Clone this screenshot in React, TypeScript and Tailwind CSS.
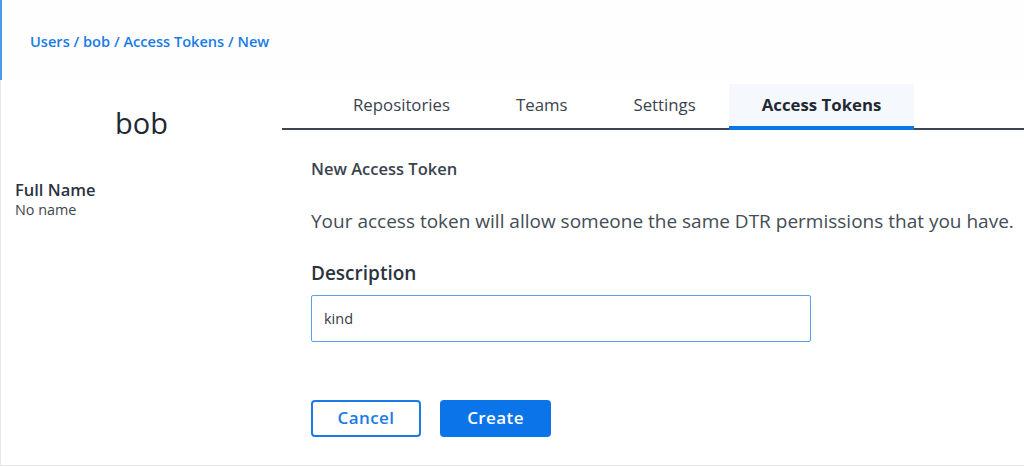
import React from 'react';

const tabs = ['Repositories', 'Teams', 'Settings', 'Access Tokens'];

export default function App() {
  const active = 'Access Tokens';

  return (
    <div className="w-[1024px] h-[467px] bg-white overflow-hidden text-[#2b3440]" style={{ fontFamily: '"Open Sans", "Noto Sans", sans-serif' }}>
      {/* Breadcrumb header */}
      <div className="h-[80px] border-l-2 border-[#4a9be8] bg-[#fefefe] flex items-center pl-[28px] pt-[4px]">
        <nav className="text-[14.6px] font-semibold text-[#1a7be6]">
          Users / bob / Access Tokens / New
        </nav>
      </div>

      <div className="h-[386px] flex border-l border-b border-[#e8e8ea]">
        {/* Profile sidebar */}
        <aside className="w-[281px] shrink-0 pt-[24px]">
          <h1 className="text-center text-[29px] leading-[38px] font-medium text-[#1f2933]">bob</h1>
          <div className="mt-[37px] pl-[14px]">
            <div className="text-[16.5px] leading-[21px] font-semibold text-[#2b3440]">Full Name</div>
            <div className="text-[14.4px] leading-[19px] text-[#3d4650]">No name</div>
          </div>
        </aside>

        {/* Main */}
        <main className="flex-1 min-w-0 pt-[4px]">
          <div className="flex border-b-2 border-[#3b4652] pl-[38px]">
            {tabs.map((t) => (
              <div
                key={t}
                className={
                  t === active
                    ? 'h-[46px] -mb-[2px] px-[33px] flex items-center border-b-4 border-[#0b74e8] bg-[#f5f8fd] text-[16.8px] font-bold text-[#1f2933]'
                    : 'h-[46px] -mb-[2px] px-[33px] flex items-center pb-[4px] text-[16.8px] text-[#3a434d]'
                }
              >
                {t}
              </div>
            ))}
          </div>

          <div className="pl-[29px] pt-[28px]">
            <h2 className="text-[16.5px] leading-[22px] font-semibold text-[#3a434d]">New Access Token</h2>
            <p className="mt-[28px] text-[19px] leading-[26px] text-[#444c55] whitespace-nowrap">
              Your access token will allow someone the same DTR permissions that you have.
            </p>
            <label className="block mt-[26px] text-[19px] leading-[26px] font-semibold text-[#2b3440]">Description</label>
            <input
              readOnly
              value="kind"
              className="mt-[9px] w-[500px] h-[47px] px-[12px] border border-[#5c9ee8] rounded-[2px] text-[14.5px] text-[#333b44] outline-none"
            />
            <div className="mt-[58px] flex gap-[19px]">
              <button className="w-[110px] h-[37px] pb-[1px] border-2 border-[#1a7be6] rounded-[4px] text-[17px] font-semibold text-[#1a7be6] bg-white tracking-[0.4px]">
                Cancel
              </button>
              <button className="w-[111px] h-[37px] pb-[1px] rounded-[4px] bg-[#0b74e8] text-[17px] font-semibold text-white tracking-[0.4px]">
                Create
              </button>
            </div>
          </div>
        </main>
      </div>
    </div>
  );
}
